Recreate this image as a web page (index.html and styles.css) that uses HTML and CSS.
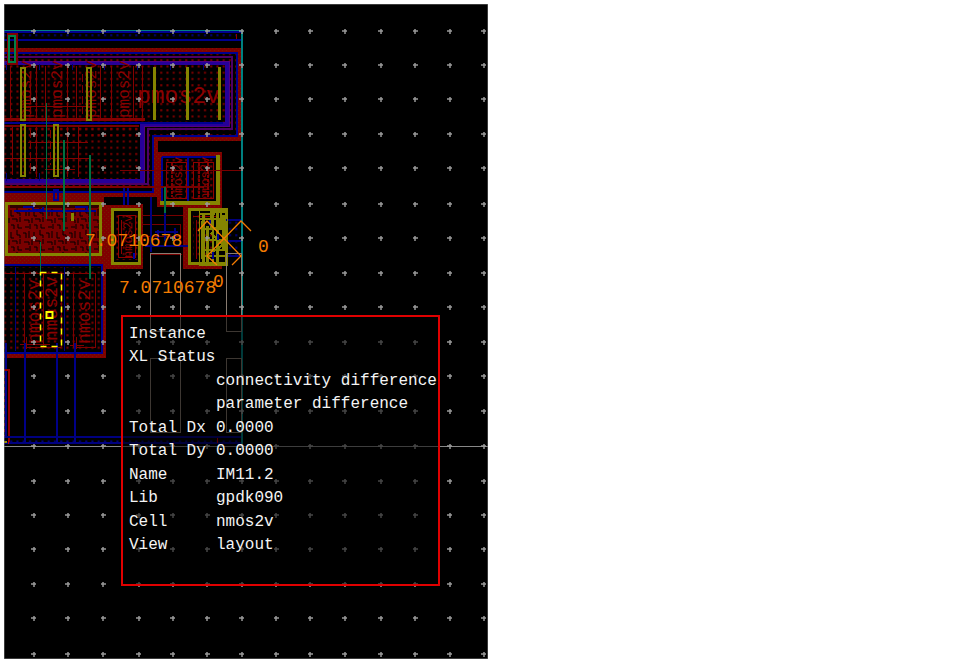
FILE: index.html
```html
<!DOCTYPE html>
<html lang="en">
<head>
<meta charset="utf-8">
<title>Layout viewer</title>
<meta name="viewport" content="width=device-width, initial-scale=1">
<link rel="stylesheet" href="styles.css">
</head>
<body>
<main class="viewer">
<svg class="layout" viewBox="4 4 484 655" aria-label="Chip layout">
<defs>
<pattern id="contacts" width="6.25" height="6.25" x="2" y="1" patternUnits="userSpaceOnUse"><rect x="2" y="2" width="2" height="2" fill="#800000"/></pattern>
<pattern id="vias" width="6.25" height="6.25" x="2" y="1" patternUnits="userSpaceOnUse"><rect x="2" y="2" width="2" height="2" fill="#000080"/></pattern>
<pattern id="metal" width="4" height="4" patternUnits="userSpaceOnUse"><rect width="4" height="4" fill="#800000"/><path d="M0 0h1v1h-1zM2 2h1v1h-1z" fill="#741c00"/></pattern>
<pattern id="weave" width="23" height="22" x="10" y="208" patternUnits="userSpaceOnUse"><rect width="23" height="22" fill="#780000"/><path d="M1 2v6h3M7 0v5h3v3M13 3h3v5M19 1v7M2 11h5v3M10 9v5M14 12h5v3M22 10v5M1 17h3v4M8 16v4h4M15 19h4M20 16v5" fill="none" stroke="#000"/></pattern>
<path id="ticks" d="M31 0h5M65 0h5M101 0h5M136 0h5M170 0h5M205 0h5M239 0h5M274 0h5M308 0h5M342 0h5M378 0h5M413 0h5M447 0h5M481 0h5M34-2v5M68-2v5M103-2v5M139-2v5M173-2v5M207-2v5M242-2v5M276-2v5M310-2v5M345-2v5M381-2v5M415-2v5M450-2v5M484-2v5"/>
</defs>
<rect x="3" y="3" width="486" height="657" fill="#000"/>

<!-- guard rings -->
<g fill="none" class="crisp">
<rect x="4" y="54" width="232" height="83" fill="url(#contacts)"/>
<rect x="4" y="125" width="146" height="62" fill="url(#contacts)"/>
<path d="M4 34h233v5H4z" fill="url(#vias)"/>
<path d="M4 39h231M236 34v6" stroke="#900000" stroke-dasharray="5 2"/>
<path d="M4 32h237M4 40h237" stroke="#000090" stroke-width="2"/>
<path d="M4 50h235v89H156v56H4" stroke="url(#metal)" stroke-width="4"/>
<path d="M4 53h233v83H153v56H4" stroke="#000090" stroke-width="2"/>
<path d="M4 57h228v72h-84v55H4" stroke="#4c0068" stroke-width="2"/>
<path d="M4 63h223v61h-85v57H4" stroke="#260098" stroke-width="4"/>
<path d="M4 61h225v65h-85v57" stroke="#520080"/>
<path d="M4 123h219" stroke="#000090" stroke-width="2"/>
<path d="M4 126h135" stroke="#780000" stroke-width="2"/>
<path d="M4 187h149" stroke="#800000" stroke-width="2"/>
<path d="M6 64v6M39 64v6M72 64v6M104 64v6M137 64v6M170 64v6M203 64v6M6 173v8M39 173v8" stroke="#000080"/>
</g>

<!-- upper transistors -->
<g fill="none" stroke="#840000" class="crisp">
<path d="M10 66v52M36 66v52M45 66v52M67 66v52M76 66v52M100 66v52M111 66v52M133 66v52M142 66v52M12 127v48M36 127v50M46 127v50M67 127v50M78 127v50M28 106h62M28 142h60M4 158h85M45 169h30"/>
<path d="M4 119h141" stroke-width="3"/>
<path d="M30 74v40M82 74v40M30 130v42M50 130v35" stroke-dasharray="8 3"/>
</g>
<g class="cell-name upper-name">
<text transform="translate(62 118) rotate(-90)">pmos2v</text>
<text transform="translate(129 118) rotate(-90)">pmos2v</text>
<text transform="translate(31 118) rotate(-90)">pmos2v</text>
<text transform="translate(96 118) rotate(-90)">pmos2v</text>
<text class="wide-name" x="137" y="103">pmos2v</text>
</g>
<g fill="none" stroke="#858500" class="crisp">
<path d="M21 68h4v52h-4zM87 68h4v52h-4zM21 125h4v51h-4zM54 125h4v51h-4z" stroke-width="2"/>
<path d="M154 67v53M187 67v53M219 67v53" stroke-width="3"/>
</g>

<!-- lower left block -->
<g class="crisp" fill="none">
<path d="M4 194h100v11h3v64h-1v89H4v-4h98v-90H4z" fill="url(#metal)"/>
<path d="M4 192h97M4 265h98v88H4" stroke="#000090" stroke-width="2"/>
<path d="M4 267h97v84H4z" fill="url(#contacts)"/>
<rect x="6.500" y="203" width="94" height="51" fill="url(#weave)" stroke="#858500" stroke-width="3"/>
<path d="M10 206h88" stroke="#300000" stroke-width="3"/>
<path d="M14 211h82M23 207h10v3h10v-3M75 207h12v3M54 190h4v10h-4z" stroke="#000090" stroke-width="2"/>
<path d="M71 213h3v8h-3z" fill="#858500"/>
<path d="M4 273h90M24 273v74M43 273v74M61 273v74M73 273h22v74H73zM26 347h35M20 344h30M26 337v12M70 345h14M76 337v12" stroke="#800000"/>
<path d="M15 267v84M64 267v84" stroke="#000080"/>
<path d="M6 343v95M25 343v101M57 343v99M75 343v101" stroke="#000088" stroke-width="2"/>
<path d="M4 370h5v72" stroke="#900000" stroke-width="2"/>
<path d="M4 375v67" stroke="#900000" stroke-dasharray="3 3"/>
<path d="M4 437h237v7H4z" fill="url(#vias)"/><path d="M4 437h237M4 443h237" stroke="#000080" stroke-width="2"/>
<path d="M4 442h3" stroke="#999000" stroke-width="2"/><path d="M8 440v4M217 438v5" stroke="#c00000"/>
</g>
<g class="cell-name">
<text transform="translate(40 344) rotate(-90)">nmos2v</text>
<text transform="translate(57 341) rotate(-90)">nmos2v</text>
<text transform="translate(90 344) rotate(-90)">nmos2v</text>
</g>

<!-- central blocks -->
<g class="crisp" fill="none">
<path d="M107 204h36v65h-36zM157 152h65v55h-65zM183 204h39v65h-39z" fill="url(#metal)"/>
<path d="M105 197h33v8h-33z" fill="#000"/>
<path d="M162 157h54v44h-54z" fill="#000"/><path d="M162 157h54v44h-54z" fill="url(#contacts)"/>
<path d="M124 187v18M128 187v18M162 157h54M162 157v44M188 157v44M221 208v12" stroke="#000090" stroke-width="2"/>
<path d="M166 162h20v36h-20zM193 162h20v36h-20z" stroke="#900000"/>
<path d="M172 163v34M199 163v34M208 163v34" stroke="#800000" stroke-width="2" stroke-dasharray="3 1"/>
<path d="M218 155v48h-58" stroke="#858500" stroke-width="4"/>
<rect x="112.500" y="209" width="27" height="54" fill="#000" stroke="#858500" stroke-width="3"/>
<path d="M115 212h23v48h-23z" fill="url(#contacts)"/>
<path d="M118 215h17v42h-17zM121 220v34" stroke="#900000"/>
<path d="M134 253v6" stroke="#0000a0" stroke-width="2"/>
<rect x="189.500" y="209" width="37" height="54" fill="#000" stroke="#858500" stroke-width="3"/>
<path d="M193 213h29v46h-29z" fill="url(#contacts)"/>
<path d="M193 216h24M196 220v39M202 216v42" stroke="#900000"/>
<path d="M120 170h121M143 215h40M143 224h37v18M143 236h38M150 254h32" stroke="#780000"/>
<path d="M120 187h84" stroke="#780000" stroke-width="2"/>
<path d="M151 197v55M165 213v28M158 230v10M175 228v12M145 246h43M155 232h23" stroke="#000080" stroke-width="2"/>
<path d="M226 220h15v37h-15z" fill="url(#vias)"/><path d="M226 220h15M226 256h15M226 241h15" stroke="#000080" stroke-width="2"/>
</g>
<g class="cell-name small-name">
<text transform="translate(182 200) rotate(-90)">nmos2v</text>
<text transform="translate(209 200) rotate(-90)">nmos2v</text>
<text transform="translate(132 258) rotate(-90)">nmos2v</text>
</g>
<g class="crisp" fill="none" stroke="#858500">
<path d="M199 209h28v56h-28z"/>
<path d="M211 211h6v17h-6zM217 219v43M223 215v36M203 215v48M207 226v36" stroke-width="3"/>
<path d="M200 219h26M201 229h25M203 240h22M201 250h25M202 256h24M213 210v52M221 210v18M199 214h16M218 212h8" stroke-width="2"/>
<path d="M217 211l3 17M202 221v38M211 233l12 12-12 8" stroke-width="2"/>
<path d="M210 220v6M213 252v7M218 234v6" stroke="#000090" stroke-width="2"/>
</g>

<g fill="none" class="crisp">
<path d="M46.500 103v116M64 140v91M90 155v124M40.500 242v43M165 187v26" stroke="#007040" stroke-width="1.500"/>
<path d="M4 30.500h238V446" stroke="#008080" stroke-width="1.500"/>
<path d="M8 34h8v29H8z" stroke="#800000" stroke-width="3"/><path d="M9 36h6v26H9z" stroke="#008048" stroke-width="2"/>
<path d="M150 331v-78h30v78zM226 253h15v78h-15zM150 358h30v74h-30zM226 358h15v74h-15z" stroke="#887b70"/>
<path d="M4 446.500h484" stroke="#888" stroke-width="1.500"/>
</g>
<g class="ticks">
<use href="#ticks" y="31"/><use href="#ticks" y="65"/><use href="#ticks" y="99"/><use href="#ticks" y="134"/><use href="#ticks" y="168"/><use href="#ticks" y="204"/><use href="#ticks" y="238"/><use href="#ticks" y="273"/><use href="#ticks" y="307"/><use href="#ticks" y="342"/><use href="#ticks" y="376"/><use href="#ticks" y="411"/><use href="#ticks" y="446"/><use href="#ticks" y="481"/><use href="#ticks" y="515"/><use href="#ticks" y="549"/><use href="#ticks" y="584"/><use href="#ticks" y="618"/><use href="#ticks" y="654"/>
</g>
<g fill="none" stroke="#ff0">
<path d="M40.500 272.500h21v74h-21z" stroke-width="1.500" stroke-dasharray="6 5"/>
<path d="M46.500 312h6v6h-6z" stroke-width="2"/>
</g>
<path d="M198 231l9-10 34 35-9 9M251 231l-10-10-34 35 10 9" fill="none" stroke="#f57c00" stroke-width="1.300"/>
<g class="measure">
<text x="85" y="246">7.0710678</text>
<text x="119" y="293">7.0710678</text>
<text x="213" y="287">0</text>
<text x="258" y="252">0</text>
</g>
<path d="M4 4h484v655H4z" fill="none" stroke="#777"/>
</svg>

<section class="info" aria-label="Instance details">
<dl class="details">
<div class="pair"><dt>Instance</dt><dd></dd><dt>XL Status</dt><dd></dd></div>
<div class="pair"><dd>connectivity difference</dd><dd>parameter difference</dd></div>
<div class="pair"><dt>Total Dx</dt><dd>0.0000</dd><dt>Total Dy</dt><dd>0.0000</dd></div>
<div class="pair"><dt>Name</dt><dd>IM11.2</dd><dt>Lib</dt><dd>gpdk090</dd></div>
<div class="pair"><dt>Cell</dt><dd>nmos2v</dd><dt>View</dt><dd>layout</dd></div>
</dl>
</section>
</main>
</body>
</html>
```

FILE: styles.css
```css
* { box-sizing: border-box; }

body {
  margin: 0;
  padding: 4px;
  background: #fff;
  font-family: "Liberation Mono", monospace;
}

.viewer {
  position: relative;
  width: fit-content;
}

.layout {
  display: block;
  width: 484px;
  height: auto;
}

.crisp { shape-rendering: crispEdges; }

.ticks { stroke: #999; stroke-width: 1.5px; }

.cell-name {
  fill: #8c0000;
  font-size: 18px;
}

.upper-name { font-size: 16px; }

.small-name { font-size: 12px; }

.wide-name { font-size: 23px; }

.measure {
  fill: #f57c00;
  font-size: 18px;
}

.info {
  position: absolute;
  left: 117px;
  top: 311px;
  min-height: 271px;
  padding: 6px 1px 6px 6px;
  border: 2px solid #e00000;
  background: rgb(0 0 0 / 55%);
  color: #f4f4f4;
  font-size: 16px;
  line-height: 23px;
  white-space: nowrap;
}

.details {
  display: grid;
  gap: 1px;
  margin: 0;
}

.pair {
  display: grid;
  grid-template-columns: 87px 1fr;
  grid-auto-rows: 23px;
}

dt { grid-column: 1; }

dd {
  grid-column: 2;
  margin: 0;
}
```
